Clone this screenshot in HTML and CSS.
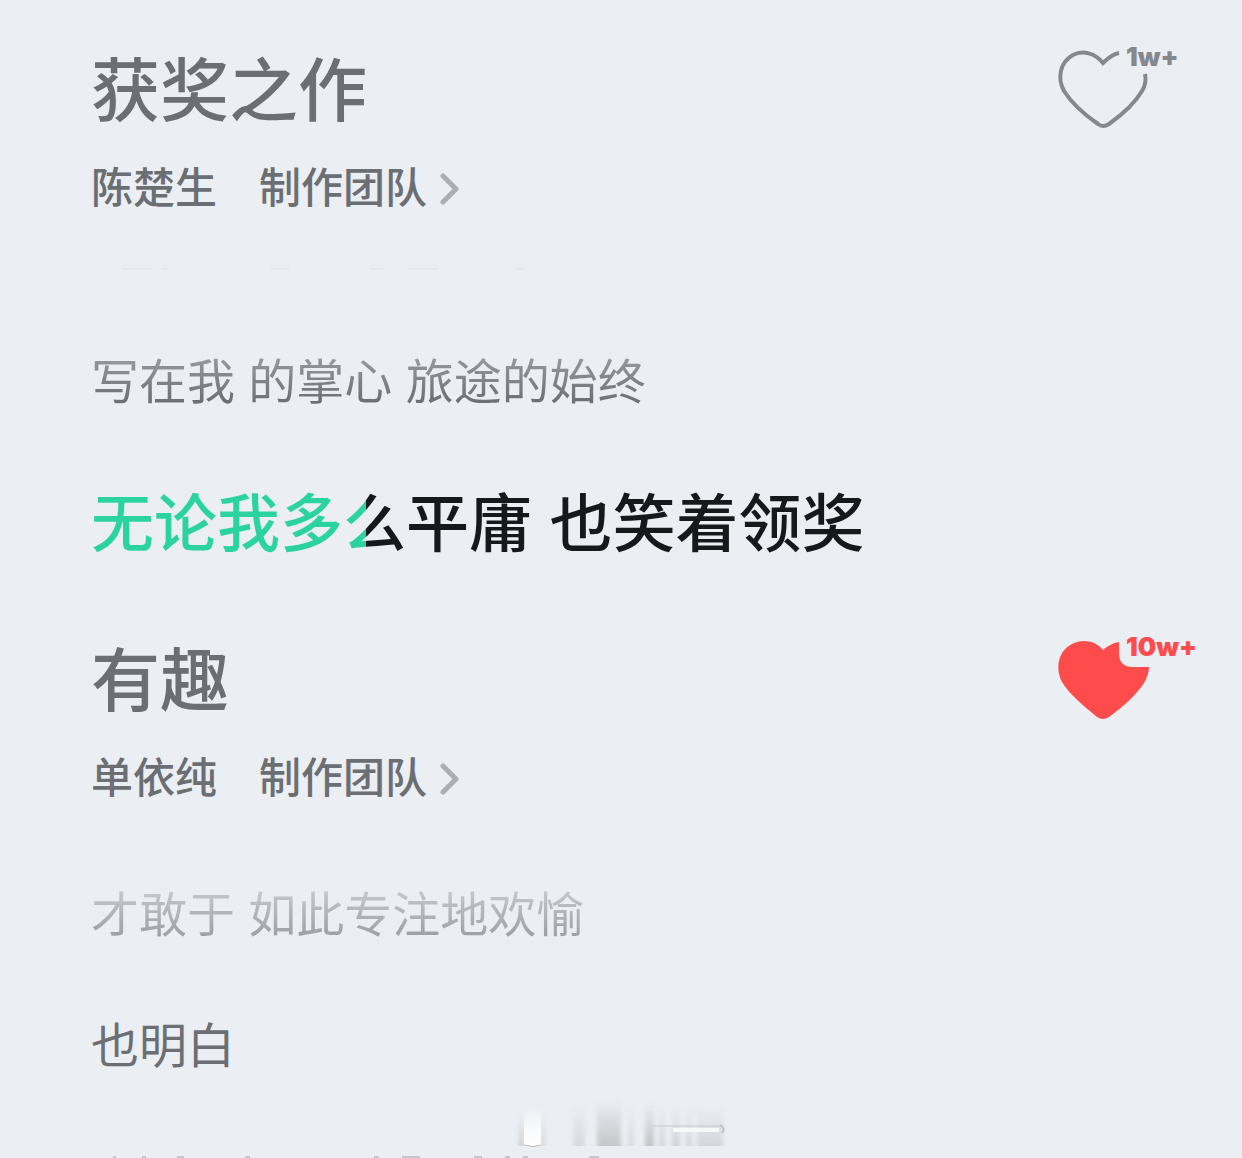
FILE: index.html
```html
<!DOCTYPE html>
<html lang="zh-CN">
<head>
<meta charset="utf-8">
<meta name="viewport" content="width=device-width, initial-scale=1">
<title>获奖之作</title>
<link rel="stylesheet" href="styles.css">
</head>
<body>
<main class="page">
  <section class="song">
    <header class="song-head">
      <div class="song-info">
        <h1 class="title">获奖之作</h1>
        <div class="credits">
          <a class="credit" href="#artist">陈楚生</a>
          <a class="credit team" href="#team">制作团队<svg class="chevron" viewBox="0 0 20 32" aria-hidden="true"><path d="M3 3 L16 16 L3 29"/></svg></a>
        </div>
      </div>
      <button class="like" type="button" aria-label="喜欢">
        <svg class="heart" viewBox="0 0 92 80" aria-hidden="true"><path d="M61 3 C55 4 50 8 45 13 C37 3 25 0 15 5 C2 12 -1 28 6 41 C13 52 27 65 40 74 Q45 78 51 74 C65 64 77 53 84 41 Q89 33 87 24"/></svg>
        <span class="count">1w+</span>
      </button>
    </header>
    <svg class="edge" viewBox="0 0 560 12" aria-hidden="true"><path d="M31 7H61M70 7H77M180 7H198M279 7H293M317 7H347M425 7H433"/></svg>
    <div class="lyrics">
      <p class="line fading">写在我 的掌心 旅途的始终</p>
      <p class="line active"><span class="progress">无论我多么平庸 也笑着领奖</span></p>
    </div>
  </section>
  <section class="song">
    <header class="song-head">
      <div class="song-info">
        <h2 class="title">有趣</h2>
        <div class="credits">
          <a class="credit" href="#artist-2">单依纯</a>
          <a class="credit team" href="#team-2">制作团队<svg class="chevron" viewBox="0 0 20 32" aria-hidden="true"><path d="M3 3 L16 16 L3 29"/></svg></a>
        </div>
      </div>
      <button class="like liked" type="button" aria-label="已喜欢">
        <svg class="heart" viewBox="0 0 92 80" aria-hidden="true"><path d="M61 2 C55 3 49 6 45 10 C37 0 24 -1 14 4 C0 11 -3 28 4 42 C11 54 27 67 39 77 Q45 81 51 77 C65 67 79 54 86 43 Q91 34 91 27 H75 Q61 27 61 13 Z"/></svg>
        <span class="count">10w+</span>
      </button>
    </header>
    <div class="lyrics">
      <p class="line faded">才敢于 如此专注地欢愉</p>
      <p class="line">也明白</p>
    </div>
  </section>
  <footer class="foot">
    <svg class="smudge" viewBox="0 0 214 48" aria-hidden="true">
      <defs>
        <linearGradient id="white" x2="0" y2="1"><stop offset="0" stop-color="#fff" stop-opacity="0"/><stop offset=".6" stop-color="#fff" stop-opacity=".8"/><stop offset="1" stop-color="#fff"/></linearGradient>
        <linearGradient id="gray" x2="0" y2="1"><stop offset="0" stop-color="#aaabad" stop-opacity="0"/><stop offset="1" stop-color="#aaabad"/></linearGradient>
        <filter id="soft" x="-20%" width="140%"><feGaussianBlur stdDeviation="2 0"/></filter>
      </defs>
      <g filter="url(#soft)" fill="url(#gray)">
        <rect x="6" y="8" width="5" height="32" opacity=".5"/><rect x="28" y="8" width="4" height="32" opacity=".4"/>
        <rect x="60" y="0" width="12" height="40" opacity=".3"/><rect x="84" y="-6" width="24" height="46" opacity=".6"/>
        <rect x="115" y="0" width="6" height="40" opacity=".3"/><rect x="132" y="-4" width="9" height="44" opacity=".65"/>
        <rect x="146" y="0" width="6" height="40" opacity=".35"/><rect x="159" y="0" width="8" height="40" opacity=".4"/>
        <rect x="173" y="0" width="6" height="40" opacity=".35"/><rect x="184" y="0" width="26" height="40" opacity=".35"/>
      </g>
      <rect x="11" y="2" width="17" height="38" fill="url(#white)"/>
      <path d="M11 39 Q20 42 28 39" fill="none" stroke="#b9babb"/>
      <path d="M140 20H207" fill="none" stroke="#c9cbce"/>
      <path d="M160 24H206" stroke="#f7f8f9" stroke-width="4"/>
      <path d="M207 19Q213 23 209 27" fill="none" stroke="#bfc1c4" stroke-width="2"/>
    </svg>
    <svg class="edge" viewBox="0 0 560 4" aria-hidden="true"><path class="tips" d="M23 3H26M52 3H56M87 3H94M155 3H160M284 3H289M312 3H330M384 3H392M415 3H420M433 3H438M499 3H509"/></svg>
  </footer>
</main>
</body>
</html>
```
FILE: styles.css
```css
* { box-sizing: border-box; }

body {
  margin: 0;
  background: #ebeef3;
  color: #6b6e73;
  font-family: "Liberation Sans", "Noto Sans CJK SC", sans-serif;
}

.page { overflow: hidden; }

.song { padding: 50px 32px 0 91px; }
.song + .song { padding-top: 74px; }

.song-head {
  display: flex;
  justify-content: space-between;
  align-items: flex-start;
}

.title {
  margin: 0;
  font-size: 69px;
  line-height: 86px;
  font-weight: 500;
}

.credits {
  display: flex;
  gap: 42px;
  margin-top: 25px;
}

.credit {
  color: inherit;
  text-decoration: none;
  font-size: 42px;
  line-height: 56px;
  font-weight: 500;
}

.team {
  display: flex;
  align-items: center;
  gap: 13px;
}

.chevron {
  width: 20px;
  height: 32px;
  fill: none;
  stroke: #abaeb3;
  stroke-width: 5;
  stroke-linecap: round;
  stroke-linejoin: round;
}

.like {
  position: relative;
  width: 152px;
  height: 80px;
  padding: 0;
  border: 0;
  background: none;
  color: #85888d;
  text-align: left;
}

.heart {
  display: block;
  width: 92px;
  height: 80px;
  fill: none;
  stroke: currentColor;
  stroke-width: 4;
  overflow: visible;
}

.liked { color: #fe4b4c; }
.liked .heart { fill: currentColor; stroke: none; }

.count {
  position: absolute;
  left: 68px;
  top: -8px;
  font: 900 26px/30px Inter, sans-serif;
}

.edge {
  display: block;
  width: 560px;
  height: 12px;
  fill: none;
  stroke: #e4e6ea;
  stroke-width: 2;
}

.song .edge { margin-top: 45px; }
.song .edge + .lyrics { margin-top: 77px; }

.lyrics {
  display: flex;
  flex-direction: column;
  gap: 67px;
  margin-top: 77px;
}

.line {
  margin: 0;
  font-size: 48px;
  line-height: 64px;
}

.fading, .faded, .progress {
  width: fit-content;
  color: transparent;
  -webkit-background-clip: text;
  background-clip: text;
}

.fading { background-image: linear-gradient(#96999e 10%, #696c71 85%); }
.faded { background-image: linear-gradient(#c6c8cd 10%, #9b9ea3 85%); }

.active {
  font-size: 63px;
  line-height: 84px;
  font-weight: 500;
}

.progress {
  display: inline-block;
  background-image: linear-gradient(90deg, #2ad3a0 275px, #16181b 275px);
}

.foot { padding: 27px 42px 0 90px; }

.smudge {
  display: block;
  width: 214px;
  height: 48px;
  margin-left: 423px;
  overflow: visible;
}

.foot .edge { height: 4px; stroke: #c3c7c9; }
```
